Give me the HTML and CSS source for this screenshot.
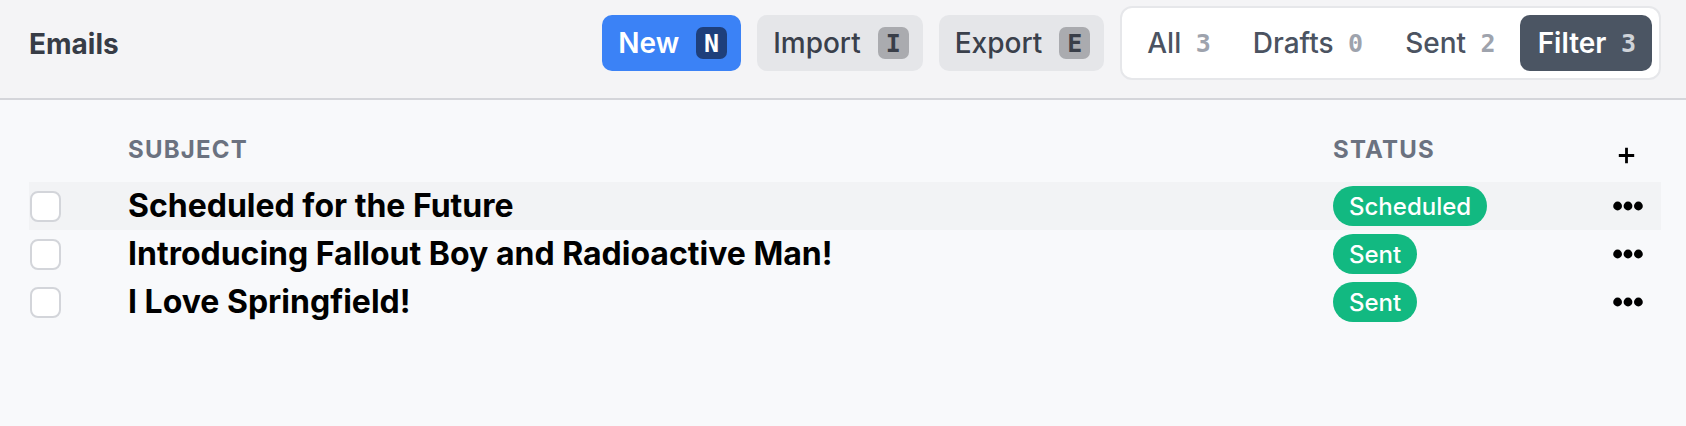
FILE: index.html
```html
<!DOCTYPE html>
<html lang="en">
<head>
<meta charset="utf-8">
<title>Emails</title>
<link rel="stylesheet" href="styles.css">
</head>
<body>
<header class="topbar">
  <h1 class="title">Emails</h1>
  <div class="toolbar">
    <button class="btn btn-primary">New <kbd class="kbd kbd-primary">N</kbd></button>
    <button class="btn btn-secondary">Import <kbd class="kbd">I</kbd></button>
    <button class="btn btn-secondary">Export <kbd class="kbd">E</kbd></button>
    <nav class="tabs">
      <a class="tab">All <span class="count">3</span></a>
      <a class="tab">Drafts <span class="count">0</span></a>
      <a class="tab">Sent <span class="count">2</span></a>
      <a class="tab tab-active">Filter <span class="count">3</span></a>
    </nav>
  </div>
</header>
<main class="content">
  <div class="table">
    <div class="thead">
      <div class="cell"></div>
      <div class="th">Subject</div>
      <div class="th">Status</div>
      <div class="th th-add">
        <svg class="plus" viewBox="0 0 17 17" width="17" height="17"><path d="M8.5 0.8v15.4M0.8 8.5h15.4" stroke="#000" stroke-width="2.8" fill="none"/></svg>
      </div>
    </div>
    <div class="row row-hl">
      <div class="cell"><span class="checkbox"></span></div>
      <div class="subject">Scheduled for the Future</div>
      <div class="cell"><span class="badge">Scheduled</span></div>
      <div class="cell cell-menu">
        <svg class="dots" viewBox="0 0 30 10" width="30" height="10"><circle cx="4.6" cy="5" r="4.4"/><circle cx="15" cy="5" r="4.4"/><circle cx="25.4" cy="5" r="4.4"/></svg>
      </div>
    </div>
    <div class="row">
      <div class="cell"><span class="checkbox"></span></div>
      <div class="subject">Introducing Fallout Boy and Radioactive Man!</div>
      <div class="cell"><span class="badge">Sent</span></div>
      <div class="cell cell-menu">
        <svg class="dots" viewBox="0 0 30 10" width="30" height="10"><circle cx="4.6" cy="5" r="4.4"/><circle cx="15" cy="5" r="4.4"/><circle cx="25.4" cy="5" r="4.4"/></svg>
      </div>
    </div>
    <div class="row">
      <div class="cell"><span class="checkbox"></span></div>
      <div class="subject">I Love Springfield!</div>
      <div class="cell"><span class="badge">Sent</span></div>
      <div class="cell cell-menu">
        <svg class="dots" viewBox="0 0 30 10" width="30" height="10"><circle cx="4.6" cy="5" r="4.4"/><circle cx="15" cy="5" r="4.4"/><circle cx="25.4" cy="5" r="4.4"/></svg>
      </div>
    </div>
  </div>
</main>
</body>
</html>
```

FILE: styles.css
```css
* { box-sizing: border-box; }

html, body {
  margin: 0;
  padding: 0;
}

body {
  background: #f8f9fb;
  font-family: Inter, "Noto Sans", "Liberation Sans", sans-serif;
  color: #000;
  height: 426px;
  overflow: hidden;
}

.topbar {
  display: flex;
  align-items: center;
  justify-content: space-between;
  height: 100px;
  padding: 7px 25px 19px 29px;
  background: #f4f4f6;
  border-bottom: 2px solid #d4d5da;
}

.title {
  margin: 0;
  font-size: 28px;
  font-weight: 700;
  color: #373c46;
  line-height: 40px;
  padding-top: 2px;
}

.toolbar {
  display: flex;
  align-items: center;
  gap: 16px;
}

.btn {
  display: flex;
  align-items: center;
  gap: 17px;
  height: 56px;
  padding: 0 14px 0 16px;
  border: none;
  border-radius: 10px;
  font-family: inherit;
  font-size: 28px;
  line-height: 1;
}

.btn-primary {
  background: #3b82f6;
  color: #fff;
  font-weight: 600;
}

.btn-secondary {
  background: #e5e6e9;
  color: #3a404b;
  font-weight: 500;
}

.kbd {
  display: flex;
  align-items: center;
  justify-content: center;
  width: 31px;
  height: 32px;
  border-radius: 7px;
  background: #aaabaf;
  color: #393e48;
  font-family: "DejaVu Sans Mono", "Liberation Mono", monospace;
  font-size: 25px;
  font-weight: 700;
}

.kbd-primary {
  background: #1e3f7b;
  color: #fff;
}

.tabs {
  display: flex;
  align-items: center;
  gap: 6px;
  height: 74px;
  padding: 7px;
  background: #fff;
  border: 2px solid #e6e7ea;
  border-radius: 12px;
}

.tab {
  display: flex;
  align-items: center;
  height: 56px;
  padding: 0 18px;
  border-radius: 10px;
  font-size: 28px;
  font-weight: 500;
  color: #4b5361;
}

.count {
  margin-left: 14.5px;
  font-family: "DejaVu Sans Mono", "Liberation Mono", monospace;
  font-size: 25px;
  font-weight: 700;
  color: #9ea3ad;
}

.tab-active {
  background: #4b5563;
  color: #fff;
  font-weight: 600;
  padding: 0 16px 0 18px;
}

.tab-active .count {
  color: #cfd3d9;
}

.content {
  padding: 30px 25px 0 29px;
}

.table {
  display: flex;
  flex-direction: column;
}

.thead,
.row {
  display: grid;
  grid-template-columns: 99px 1fr 262px 66px;
}

.thead {
  height: 52px;
  align-items: start;
}

.th {
  font-size: 24px;
  line-height: 40px;
  font-weight: 700;
  letter-spacing: 0.05em;
  text-transform: uppercase;
  color: #6b7280;
}

.th-add {
  display: flex;
  justify-content: center;
  align-items: center;
  height: 50px;
}

.plus {
  display: block;
  margin-left: -4px;
}

.row {
  height: 48px;
  align-items: center;
}

.row-hl {
  background: #f2f3f5;
}

.cell {
  display: flex;
  align-items: center;
}

.cell-menu {
  justify-content: center;
}

.checkbox {
  display: block;
  width: 31px;
  height: 31px;
  margin-left: 1px;
  background: #fff;
  border: 2px solid #d3d5da;
  border-radius: 8px;
}

.subject {
  font-size: 32px;
  font-weight: 700;
  line-height: 40px;
  color: #000;
  white-space: nowrap;
}

.badge {
  display: inline-flex;
  align-items: center;
  height: 40px;
  padding: 0 16px;
  border-radius: 20px;
  background: #12b981;
  color: #fff;
  font-size: 24px;
  font-weight: 500;
}

.dots {
  display: block;
  fill: #000;
}
```
